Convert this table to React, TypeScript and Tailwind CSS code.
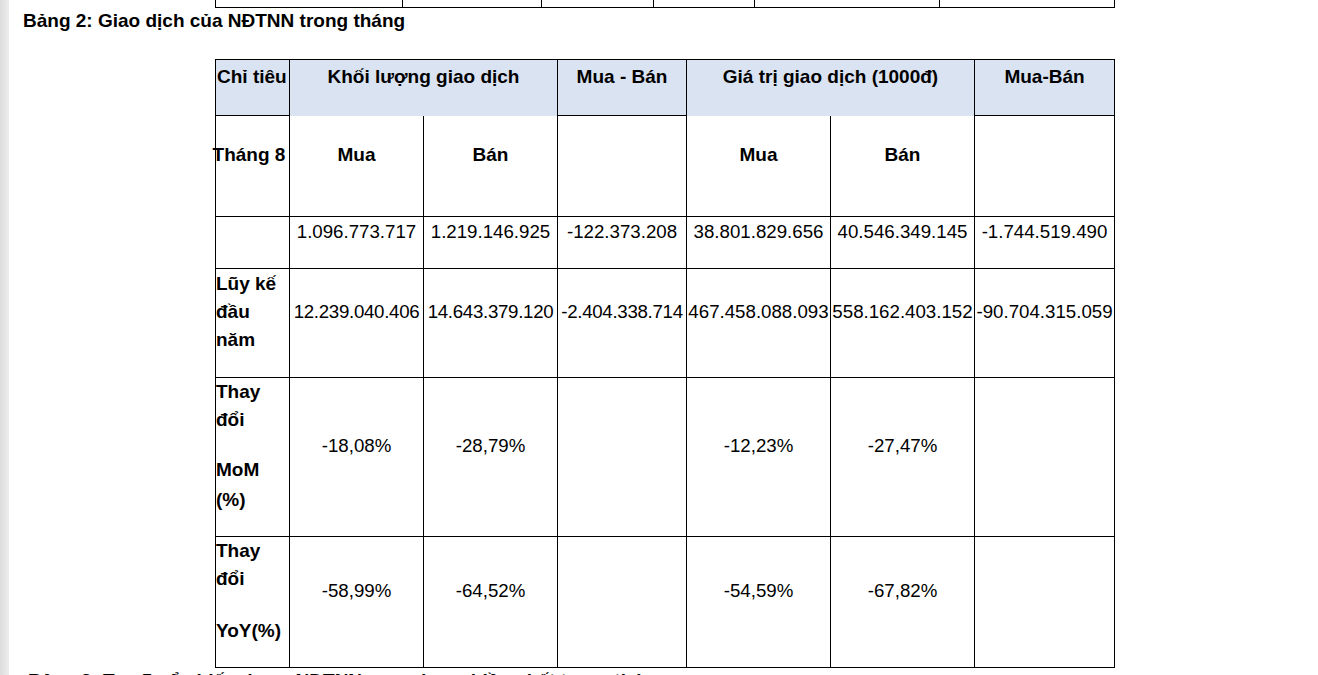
import React from 'react';

// Ô bảng dùng chung
interface CellProps {
  children?: React.ReactNode;
  className?: string;
}

const Cell: React.FC<CellProps> = ({ children, className = '' }) => (
  <div className={`flex items-center justify-center border-r border-b border-black pb-[22px] ${className}`}>
    {children}
  </div>
);

const Num: React.FC<{ v: string; tight?: boolean }> = ({ v, tight }) => (
  <Cell className={`whitespace-nowrap text-[18.7px] ${tight ? 'tracking-[-0.3px]' : ''}`}>{v}</Cell>
);

// Cột "Chỉ tiêu" có nhiều dòng
const LabelCell: React.FC<{ children: React.ReactNode }> = ({ children }) => (
  <div className="flex flex-col border-r border-b border-black text-[19px] font-bold leading-[28px]">
    {children}
  </div>
);

export default function App() {
  const prevCols = ['w-[187px]', 'w-[139px]', 'w-[112px]', 'w-[101px]', 'w-[185px]', 'w-[175px]'];

  return (
    <div className="flex h-[675px] w-full overflow-hidden bg-white font-['Liberation_Sans',Arial,sans-serif] text-black">
      <div className="w-[9px] shrink-0 bg-gradient-to-r from-[#dcdcdc] to-[#ededed]" />

      <div className="min-w-0 flex-1">
        {/* Dòng cuối của bảng trước */}
        <div className="ml-[206px] flex h-[8px] w-fit border-b border-l border-black">
          {prevCols.map((w, i) => (
            <div key={i} className={`${w} border-r border-black`} />
          ))}
        </div>

        <p className="mt-[2px] pl-[14px] text-[19px] font-bold leading-[22px]">
          Bảng 2: Giao dịch của NĐTNN trong tháng
        </p>

        {/* Bảng 2 */}
        <div className="mt-[27px] ml-[206px] grid w-fit grid-cols-[74px_134px_134px_129px_144px_144px_140px] grid-rows-[56px_101px_52px_109px_159px_131px] border-t border-l border-black leading-[22px]">
          {/* Hàng tiêu đề */}
          <Cell className="justify-start bg-[#dae3f2] pl-[1px] text-[19px] font-bold whitespace-nowrap">Chỉ tiêu</Cell>
          <Cell className="col-span-2 border-b-0 bg-[#dae3f2] text-[19px] font-bold">Khối lượng giao dịch</Cell>
          <Cell className="bg-[#dae3f2] text-[19px] font-bold">Mua - Bán</Cell>
          <Cell className="col-span-2 border-b-0 bg-[#dae3f2] text-[19px] font-bold">Giá trị giao dịch (1000đ)</Cell>
          <Cell className="bg-[#dae3f2] text-[19px] font-bold">Mua-Bán</Cell>

          {/* Tháng 8 */}
          <Cell className="pr-[7px] text-[19px] font-bold whitespace-nowrap">Tháng 8</Cell>
          <Cell className="text-[19px] font-bold">Mua</Cell>
          <Cell className="text-[19px] font-bold">Bán</Cell>
          <Cell />
          <Cell className="text-[19px] font-bold">Mua</Cell>
          <Cell className="text-[19px] font-bold">Bán</Cell>
          <Cell />

          {/* Số liệu tháng */}
          <Cell />
          <Num v="1.096.773.717" />
          <Num v="1.219.146.925" />
          <Num v="-122.373.208" />
          <Num v="38.801.829.656" />
          <Num v="40.546.349.145" />
          <Num v="-1.744.519.490" />

          {/* Lũy kế */}
          <LabelCell>
            <span className="pt-[1px]">Lũy kế</span>
            <span>đầu</span>
            <span>năm</span>
          </LabelCell>
          <Num v="12.239.040.406" tight />
          <Num v="14.643.379.120" tight />
          <Num v="-2.404.338.714" tight />
          <Num v="467.458.088.093" />
          <Num v="558.162.403.152" />
          <Num v="-90.704.315.059" />

          {/* MoM */}
          <LabelCell>
            <span>Thay</span>
            <span>đổi</span>
            <span className="mt-[22px]">MoM</span>
            <span className="mt-[2px]">(%)</span>
          </LabelCell>
          <Num v="-18,08%" />
          <Num v="-28,79%" />
          <Cell />
          <Num v="-12,23%" />
          <Num v="-27,47%" />
          <Cell />

          {/* YoY */}
          <LabelCell>
            <span>Thay</span>
            <span>đổi</span>
            <span className="mt-[24px] whitespace-nowrap">YoY(%)</span>
          </LabelCell>
          <Num v="-58,99%" />
          <Num v="-64,52%" />
          <Cell />
          <Num v="-54,59%" />
          <Num v="-67,82%" />
          <Cell />
        </div>

        <p className="mt-[2px] pl-[19px] text-[19px] font-bold leading-[22px] whitespace-nowrap">
          Bảng 3: Top 5 cổ phiếu được NĐTNN mua ròng nhiều nhất trong tháng
        </p>
      </div>
    </div>
  );
}
